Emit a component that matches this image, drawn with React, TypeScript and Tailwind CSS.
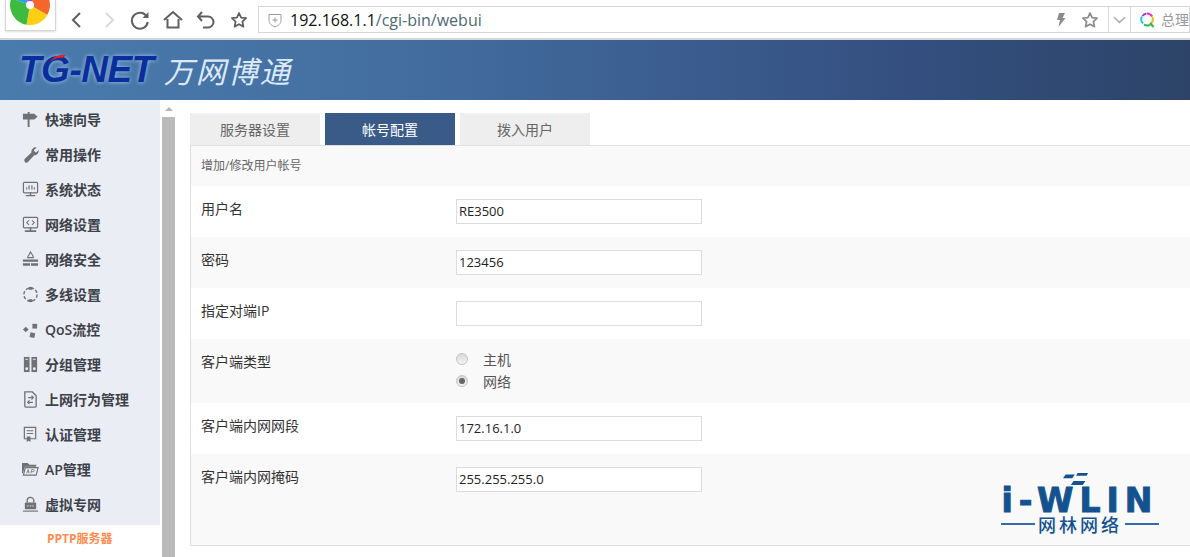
import { ReactNode } from "react";

const CJK = "font-['Open_Sans','Noto_Sans_CJK_SC',sans-serif]";

// toolbar icons
const ToolIcon = ({ children, className = "", size = 24 }: { children: ReactNode; className?: string; size?: number }) => (
  <svg viewBox="0 0 24 24" width={size} height={size} fill="none" stroke="currentColor" strokeWidth="2" className={className}>
    {children}
  </svg>
);

const Star = ({ className = "" }: { className?: string }) => (
  <svg viewBox="0 0 18 18" width="18" height="18" fill="none" stroke="currentColor" strokeWidth="1.8" strokeLinejoin="round" className={className}>
    <path d="M9 2l2.100 4.600 5 .6-3.700 3.400 1 5L9 13.200l-4.400 2.400 1-5L1.900 7.200l5-.6z" />
  </svg>
);

const Pinwheel = () => (
  <svg viewBox="0 0 50 30" width="50" height="30" className="block">
    <path d="M24 5L34 -12.300A20 20 0 0 1 41.300 15z" fill="#f4662a" />
    <path d="M24 5L41.300 15A20 20 0 0 1 20.500 24.700z" fill="#fbcf14" />
    <path d="M24 5L20.500 24.700A20 20 0 0 1 5.200 -1.800z" fill="#3dbb3f" />
    <path d="M24 5L5.200 -1.800A20 20 0 0 1 14 -12.300z" fill="#2f9fe8" />
    <path d="M24 5L14 -12.300A20 20 0 0 1 34 -12.300z" fill="#a63fd0" />
    <circle cx="24" cy="5" r="4" fill="#fff" />
  </svg>
);

const BrowserBar = () => (
  <div className="flex h-[40px] items-start border-b-2 border-[#d3d6da] bg-white">
    <div className="ml-[5px] h-[31px] w-[51px] shrink-0 overflow-hidden border-b border-r border-l border-[#d5d5d5] shadow-sm">
      <Pinwheel />
    </div>
    <div className="ml-[10px] mt-[8px] flex items-center text-[#5f5f5f]">
      <ToolIcon className="mr-[6px]"><path d="M14 5l-7 7 7 7" /></ToolIcon>
      <ToolIcon className="mr-[8px] text-[#d9d9d9]"><path d="M10 5l7 7-7 7" /></ToolIcon>
      <ToolIcon className="mr-[9px]">
        <path d="M19 9a8 8 0 1 0 .8 5" />
        <path d="M20.500 4v6h-6z" fill="currentColor" stroke="none" />
      </ToolIcon>
      <ToolIcon className="mr-[9px]">
        <path d="M3 12l9-8 9 8M6.500 11v8.500h11V11" />
      </ToolIcon>
      <ToolIcon className="mr-[12px]">
        <path d="M8 4L4 8.500 8 13M5 8.500h9a5.500 5.500 0 0 1 0 11H9" />
      </ToolIcon>
      <Star className="text-[#5f5f5f]" />
    </div>
    <div className="ml-[10px] mt-[6px] flex h-[27px] flex-1 items-center border border-[#d6d6d6] pl-[9px]">
      <svg viewBox="0 0 14 16" width="14" height="16" fill="none" stroke="#9a9a9a" strokeWidth="1">
        <path d="M1 2.500h12v6c0 3-2.500 5-6 6.500-3.500-1.500-6-3.500-6-6.500z" />
        <path d="M7 5.500v5M4.500 8h5" />
      </svg>
      <div className="ml-[8px] flex-1 font-['Open_Sans',sans-serif] text-[16px] leading-none text-[#4b6a75]">
        <span className="text-[#111]">192.168.1.1</span>/cgi-bin/webui
      </div>
      <svg viewBox="0 0 10 14" width="10" height="14" fill="#8b8b8b" className="mr-[15px]">
        <path d="M3 0h6L6.500 5H9.500L2.500 14l1.500-7H1z" />
      </svg>
      <Star className="mr-[9px] text-[#8e8e8e]" />
      <div className="box-content flex h-full w-[21px] items-center justify-center border-l border-r border-[#d6d6d6]">
        <svg viewBox="0 0 14 8" width="13" height="8" fill="none" stroke="#a6adb3" strokeWidth="1.700"><path d="M1 1l6 5.500L13 1" /></svg>
      </div>
      <svg viewBox="0 0 16 16" width="16" height="16" fill="none" strokeWidth="2" className="ml-[8px] shrink-0">
        <path d="M8 1.500a6 6 0 0 1 5.200 3" stroke="#e23bb0" />
        <path d="M13.400 5a6 6 0 0 1-1.500 6.500" stroke="#f2b818" />
        <path d="M11 12.800a6 6 0 0 1-6-.2" stroke="#2cb84a" />
        <path d="M4 11.500A6 6 0 0 1 3 4.500" stroke="#24c4e8" />
        <path d="M3.500 4a6 6 0 0 1 4-2.500" stroke="#8a46d8" />
        <path d="M11 11l3.500 4" stroke="#2cb84a" />
      </svg>
      <span className="ml-[6px] whitespace-nowrap font-['Noto_Sans_CJK_SC',sans-serif] text-[14px] text-[#999]">总理</span>
    </div>
  </div>
);

const Header = () => (
  <div className="flex h-[60px] items-center bg-[linear-gradient(90deg,#4a7bad,#436d9f_35%,#345081_75%,#2d4468)] pl-[19px]">
    <span className="relative -top-[1px] font-['Liberation_Sans',sans-serif] text-[37px] font-bold italic leading-none tracking-[-0.5px] text-[#0a2f9c] [text-shadow:0_0_4px_#a9cdf0]">
      TG-NET
      {/* red swoosh on the G */}
      <svg viewBox="0 0 20 10" width="20" height="10" className="absolute left-[30px] top-[2px]">
        <path d="M1 9C5 3 11 1 17 2L14 5C9 4 5 6 1 9z" fill="#e0242c" />
      </svg>
    </span>
    <span className="ml-[10px] font-['Noto_Sans_CJK_SC',sans-serif] text-[30px] italic leading-none tracking-[2px] text-[#dbe9f6]">
      万网博通
    </span>
  </div>
);

// sidebar icons, 18px grey glyphs
const g = "#6f7174";
const navIcons: Record<string, ReactNode> = {
  sign: (
    <>
      <path d="M1 3h12l3.500 3-3.500 3H1z" fill={g} />
      <path d="M6 1h2v16H6z" fill={g} />
    </>
  ),
  wrench: <path d="M15.500 1.500l-3 3 1 1.500 1.500.8 2.500-2.500c.5 2.500-1 5.500-4.500 5.500l-7 7.500c-1 .8-3 .3-3.500-1.500L2.500 14l7.500-7c-.5-3 2-6 5.500-5.500z" fill={g} />,
  monitor: (
    <>
      <rect x="1.500" y="1.500" width="15" height="11" rx="1" fill="none" stroke={g} strokeWidth="1.300" />
      <path d="M5 9V6.500M7.500 9V4.500M10.500 9V4.500M13 9V6.500" stroke={g} strokeWidth="1.200" />
      <path d="M9 12v3M4 15.500h10" stroke={g} strokeWidth="1.500" />
    </>
  ),
  code: (
    <>
      <rect x="1.500" y="1.500" width="15" height="11" rx="1" fill="none" stroke={g} strokeWidth="1.300" />
      <path d="M7.500 4.500L5 7l2.500 2.500M10.500 4.500L13 7l-2.500 2.500" fill="none" stroke={g} strokeWidth="1.100" />
      <path d="M9 12v3M3 16h12" stroke={g} strokeWidth="1.700" />
    </>
  ),
  wall: (
    <>
      <path d="M9 1c1 2 3 3.500 3 6H6c0-2 2-3 3-6z" fill="none" stroke={g} strokeWidth="1.200" />
      <path d="M1 9h16v2.500H1zM1 13h7.500v2.500H1zM9.500 13H17v2.500H9.500z" fill={g} />
    </>
  ),
  ring: (
    <>
      <circle cx="9" cy="9" r="7" fill="none" stroke={g} strokeWidth="1.500" strokeDasharray="3.500 2" />
      <rect x="7" y="1" width="4" height="3" fill={g} />
      <rect x="7" y="14" width="4" height="3" fill={g} />
    </>
  ),
  qos: (
    <>
      <path d="M4 6l3 3-3 3-3-3z" fill={g} />
      <rect x="11" y="3" width="5" height="5" fill={g} />
      <path d="M9 12l5 1-1 5-5-1z" fill={g} />
    </>
  ),
  binder: (
    <>
      <rect x="2" y="1" width="6" height="16" fill={g} />
      <rect x="10" y="1" width="6" height="16" fill={g} />
      <circle cx="5" cy="13.500" r="1.500" fill="#eaeef4" />
      <circle cx="13" cy="13.500" r="1.500" fill="#eaeef4" />
      <path d="M3.500 3.500h3M11.500 3.500h3" stroke="#eaeef4" />
    </>
  ),
  doc: (
    <>
      <path d="M3 1h8l4 4v11a1 1 0 0 1-1 1H4a1 1 0 0 1-1-1z" fill="none" stroke={g} strokeWidth="1.400" />
      <path d="M6.500 7h5M6.500 12h5" stroke={g} strokeWidth="1.300" />
      <path d="M10 5l2 2-2 2M8 10l-2 2 2 2" fill="none" stroke={g} strokeWidth="1.200" />
    </>
  ),
  cert: (
    <>
      <path d="M2.500 1.500h12v12h-12z" fill="none" stroke={g} strokeWidth="1.300" />
      <path d="M5 5h7M5 8h7" stroke={g} strokeWidth="1.200" />
      <path d="M5 11h4v6l-2-1.500L5 17z" fill={g} />
    </>
  ),
  folder: (
    <>
      <path d="M0 2h6l2 2h7v2H3L1 13H0z" fill={g} />
      <path d="M3.500 7H17l-2 8H1.500z" fill="none" stroke={g} strokeWidth="1.200" />
      <path d="M5 13l1.500-4 1 4M6 11.500h1.500M9.500 13l.8-4h1.500a1 1 0 0 1 0 2.300h-2" fill="none" stroke={g} strokeWidth="0.800" />
    </>
  ),
  lock: (
    <>
      <path d="M5.500 7V5a3.500 3.500 0 0 1 7 0v2" fill="none" stroke={g} strokeWidth="1.400" />
      <rect x="3" y="7" width="12" height="7" rx="1" fill={g} />
      <path d="M5.500 10.500h1.500M8.300 10.500h1.500M11 10.500h1.500" stroke="#eaeef4" />
      <path d="M1 16h16" stroke={g} strokeWidth="1.200" />
    </>
  ),
};

const NAV = [
  { label: "快速向导", icon: "sign" },
  { label: "常用操作", icon: "wrench" },
  { label: "系统状态", icon: "monitor" },
  { label: "网络设置", icon: "code" },
  { label: "网络安全", icon: "wall" },
  { label: "多线设置", icon: "ring" },
  { label: "QoS流控", icon: "qos" },
  { label: "分组管理", icon: "binder" },
  { label: "上网行为管理", icon: "doc" },
  { label: "认证管理", icon: "cert" },
  { label: "AP管理", icon: "folder" },
  { label: "虚拟专网", icon: "lock" },
];

const Sidebar = () => (
  <div className="flex w-[190px] shrink-0 bg-white">
    <div className="flex w-[160px] flex-col bg-[#eaeef4] pt-[2px]">
      {NAV.map((item) => (
        <div key={item.label} className="flex h-[35px] shrink-0 items-center pl-[22px]">
          <svg viewBox="0 0 18 18" width="17" height="17" className="shrink-0">
            {navIcons[item.icon]}
          </svg>
          <span className={`ml-[6px] text-[14px] font-semibold text-[#3d4149] ${CJK}`}>{item.label}</span>
        </div>
      ))}
      <div className="mt-[3px] flex flex-1 items-center bg-white pb-[4px] pl-[47px]">
        <span className={`text-[12px] font-bold text-[#ff8c4f] ${CJK}`}>PPTP服务器</span>
      </div>
    </div>
    <div className="ml-[2px] flex w-[13px] flex-col">
      <div className="flex h-[17px] items-center justify-center">
        <div className="h-0 w-0 border-x-[4px] border-b-[4px] border-x-transparent border-b-[#b5b5b5]" />
      </div>
      <div className="flex-1 bg-[#bababa]" />
    </div>
  </div>
);

const Field = ({ label, value = "", tint = false }: { label: string; value?: string; tint?: boolean }) => (
  <div className={`flex h-[51px] shrink-0 pl-[10px] ${tint ? "bg-[#f9f9f9]" : "bg-white"}`}>
    <div className="w-[255px] pt-[14px] text-[14px] leading-[18px] text-[#333]">{label}</div>
    <div className="mt-[13px] flex h-[25px] w-[246px] items-center border border-[#dcdcdc] bg-white pl-[2px] text-[13px] text-[#222]">
      {value}
    </div>
  </div>
);

const Radio = ({ label, checked = false }: { label: string; checked?: boolean }) => (
  <div className="flex h-[22px] items-center">
    <div className="flex h-[12px] w-[12px] items-center justify-center rounded-full border border-[#c4c4c4] bg-[linear-gradient(#d8d8d8,#f4f4f4)]">
      {checked && <div className="h-[6px] w-[6px] rounded-full bg-[#666]" />}
    </div>
    <span className="ml-[15px] text-[14px] text-[#555]">{label}</span>
  </div>
);

const TABS = ["服务器设置", "帐号配置", "拨入用户"];

const Content = () => (
  <div className={`flex flex-1 flex-col pt-[13px] ${CJK}`}>
    <div className="flex gap-[5px]">
      {TABS.map((tab, i) => (
        <div
          key={tab}
          className={`flex h-[32px] w-[130px] items-center justify-center text-[14px] ${
            i === 1 ? "bg-[#3a5b88] text-white" : "bg-[#eeeeee] text-[#666]"
          }`}
        >
          {tab}
        </div>
      ))}
    </div>
    <div className="relative flex h-[401px] flex-col border-b border-l border-t border-[#dfdfdf]">
      <div className="flex h-[40px] shrink-0 items-center bg-[#f9f9f9] pl-[10px] text-[12px] text-[#666]">增加/修改用户帐号</div>
      <Field label="用户名" value="RE3500" />
      <Field label="密码" value="123456" tint />
      <Field label="指定对端IP" />
      <div className="flex h-[64px] shrink-0 bg-[#f9f9f9] pl-[10px]">
        <div className="w-[255px] pt-[14px] text-[14px] leading-[18px] text-[#333]">客户端类型</div>
        <div className="pt-[9px]">
          <Radio label="主机" />
          <Radio label="网络" checked />
        </div>
      </div>
      <Field label="客户端内网网段" value="172.16.1.0" />
      <div className="flex-1 bg-[#f9f9f9]">
        <Field label="客户端内网掩码" value="255.255.255.0" tint />
      </div>
      {/* watermark logo over the panel */}
      <div className="absolute left-[810px] top-[327px] flex w-[158px] flex-col items-center">
        <svg viewBox="5 1 19 9" width="25" height="12" className="mb-[3px] mr-[9px]">
          <path d="M5 5l2-3h7l-2 3zM15 3l1-2h8l-1 2zM11 10l2-3h9l-2 3z" fill="#14528f" />
        </svg>
        <span className="font-['DejaVu_Sans',sans-serif] text-[33px] font-bold leading-[25px] tracking-[6px] text-[#14528f] [-webkit-text-stroke:1px_#14528f]">
          i-WLIN
        </span>
        <div className="mt-[3px] flex w-full items-center">
          <div className="h-[2px] flex-1 bg-[#2f6ea8]" />
          <span className="mx-[3px] font-['Noto_Sans_CJK_SC',sans-serif] text-[18px] font-medium leading-[16px] tracking-[3px] text-[#14528f]">网林网络</span>
          <div className="h-[2px] flex-1 bg-[#2f6ea8]" />
        </div>
      </div>
    </div>
  </div>
);

export default function App() {
  return (
    <div className="flex h-[557px] w-[1190px] flex-col overflow-hidden bg-white">
      <BrowserBar />
      <Header />
      <div className="flex min-h-0 flex-1">
        <Sidebar />
        <Content />
      </div>
    </div>
  );
}
